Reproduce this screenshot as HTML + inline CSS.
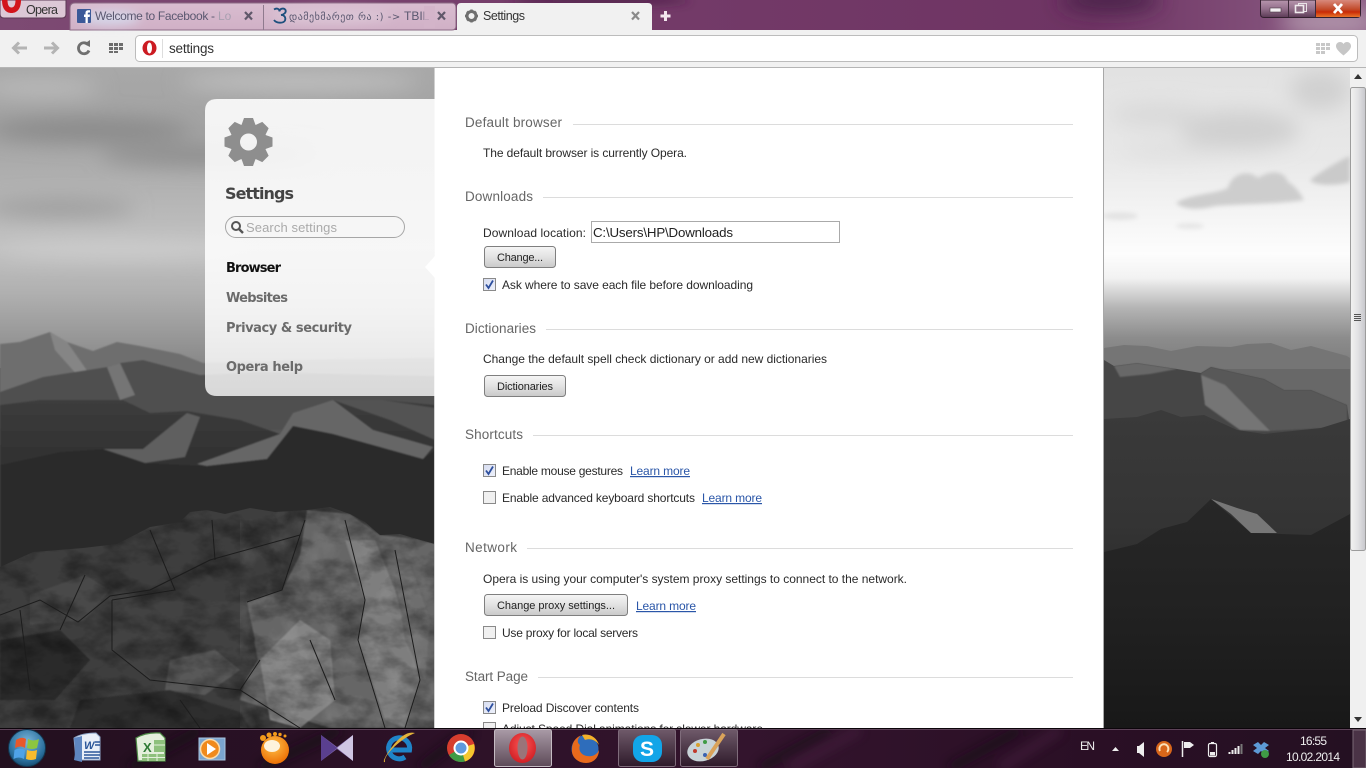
<!DOCTYPE html>
<html lang="en"><head><meta charset="utf-8"><title>Settings</title>
<style>
html,body{margin:0;padding:0;width:1366px;height:768px;overflow:hidden;background:#fff}
svg{display:block;position:absolute;left:0;top:0}
text{font-family:"Liberation Sans",sans-serif;font-size:12px;fill:#2a2a2a;white-space:pre}
.h{font-size:13.5px;fill:#666}
.l{fill:#2a56a8;text-decoration:underline}
.b{font-size:11px;fill:#222}
.n{font-family:"DejaVu Sans",sans-serif;font-weight:bold;font-size:13px;fill:#6b6b6b}
.tab{font-family:"DejaVu Sans",sans-serif;font-size:11.5px;fill:#5b5870}
.tray{font-size:12px;fill:#eee}
</style></head><body>
<svg width="1366" height="768" viewBox="0 0 1366 768" xmlns="http://www.w3.org/2000/svg">
<defs>
<linearGradient id="skyL" gradientUnits="userSpaceOnUse" x1="0" y1="68" x2="0" y2="368"><stop offset="0" stop-color="#a8a8a8"/><stop offset=".2" stop-color="#a2a2a2"/><stop offset=".6" stop-color="#c2c2c2"/><stop offset=".75" stop-color="#b0b0b0"/><stop offset="1" stop-color="#868686"/></linearGradient>
<linearGradient id="skyR" gradientUnits="userSpaceOnUse" x1="0" y1="68" x2="0" y2="368"><stop offset="0" stop-color="#e2e2e2"/><stop offset=".3" stop-color="#e8e8e8"/><stop offset=".62" stop-color="#fdfdfd"/><stop offset=".7" stop-color="#f2f2f2"/><stop offset=".8" stop-color="#b4b4b4"/><stop offset=".9" stop-color="#8c8c8c"/><stop offset="1" stop-color="#7c7c7c"/></linearGradient>
<linearGradient id="darkR" gradientUnits="userSpaceOnUse" x1="0" y1="410" x2="0" y2="600"><stop offset="0" stop-color="#3a3a3a"/><stop offset=".6" stop-color="#343434"/><stop offset="1" stop-color="#2a2a2a"/></linearGradient>
<linearGradient id="darkR2" gradientUnits="userSpaceOnUse" x1="0" y1="500" x2="0" y2="729"><stop offset="0" stop-color="#272727"/><stop offset=".5" stop-color="#212121"/><stop offset="1" stop-color="#181818"/></linearGradient>
<linearGradient id="midL" x1="0" y1="0" x2="0" y2="1"><stop offset="0" stop-color="#3c3c3c"/><stop offset="1" stop-color="#262626"/></linearGradient>
<linearGradient id="panel" x1="0" y1="0" x2="0" y2="1"><stop offset="0" stop-color="#fff" stop-opacity=".88"/><stop offset=".7" stop-color="#fff" stop-opacity=".86"/><stop offset="1" stop-color="#fff" stop-opacity=".78"/></linearGradient>
<linearGradient id="top" x1="0" y1="0" x2="1" y2="0"><stop offset="0" stop-color="#7d4a73"/><stop offset=".5" stop-color="#733a68"/><stop offset=".8" stop-color="#6e3463"/><stop offset="1" stop-color="#8d5f86"/></linearGradient>
<linearGradient id="tabg" x1="0" y1="0" x2="0" y2="1"><stop offset="0" stop-color="#d9bdd0"/><stop offset="1" stop-color="#d0b0c6"/></linearGradient>
<linearGradient id="btn" x1="0" y1="0" x2="0" y2="1"><stop offset="0" stop-color="#f6f6f6"/><stop offset=".5" stop-color="#e2e2e2"/><stop offset="1" stop-color="#c9c9c9"/></linearGradient>
<linearGradient id="task" x1="0" y1="0" x2="1" y2="0"><stop offset="0" stop-color="#23101f"/><stop offset=".3" stop-color="#2c1127"/><stop offset=".55" stop-color="#33142d"/><stop offset=".8" stop-color="#2a0f25"/><stop offset="1" stop-color="#241022"/></linearGradient>
<linearGradient id="act" x1="0" y1="0" x2="0" y2="1"><stop offset="0" stop-color="#a99aa6"/><stop offset="1" stop-color="#5d4a58"/></linearGradient>
<linearGradient id="act2" x1="0" y1="0" x2="0" y2="1"><stop offset="0" stop-color="#6f5a6a"/><stop offset="1" stop-color="#2e1a2a"/></linearGradient>
<linearGradient id="close" x1="0" y1="0" x2="0" y2="1"><stop offset="0" stop-color="#d8897c"/><stop offset=".55" stop-color="#c24a2a"/><stop offset=".7" stop-color="#c92a06"/><stop offset="1" stop-color="#e8742a"/></linearGradient>
<linearGradient id="ctl" x1="0" y1="0" x2="0" y2="1"><stop offset="0" stop-color="#b796ae"/><stop offset=".5" stop-color="#94708c"/><stop offset="1" stop-color="#5b3a55"/></linearGradient>
<linearGradient id="scr" x1="0" y1="0" x2="1" y2="0"><stop offset="0" stop-color="#f2f2f2"/><stop offset=".5" stop-color="#e2e2e4"/><stop offset="1" stop-color="#c6c6cb"/></linearGradient>
<linearGradient id="cb" x1="0" y1="0" x2="1" y2="1"><stop offset="0" stop-color="#d6dcf0"/><stop offset="1" stop-color="#eef1fb"/></linearGradient>
<radialGradient id="orb" cx=".5" cy=".35" r=".7"><stop offset="0" stop-color="#7db8dc"/><stop offset=".7" stop-color="#2a6f9d"/><stop offset="1" stop-color="#134263"/></radialGradient>
<radialGradient id="gom" cx=".45" cy=".35" r=".7"><stop offset="0" stop-color="#ffc24a"/><stop offset="1" stop-color="#ea6a00"/></radialGradient>
<radialGradient id="opa" cx=".5" cy=".4" r=".7"><stop offset="0" stop-color="#f55"/><stop offset="1" stop-color="#c8171d"/></radialGradient>
<filter id="b2" x="-30%" y="-30%" width="160%" height="160%"><feGaussianBlur stdDeviation="2"/></filter>
<filter id="b1" x="-5%" y="-5%" width="110%" height="110%"><feGaussianBlur stdDeviation=".8"/></filter>
<filter id="b5" x="-50%" y="-200%" width="200%" height="500%"><feGaussianBlur stdDeviation="5"/></filter>
<filter id="b10" x="-50%" y="-100%" width="200%" height="300%"><feGaussianBlur stdDeviation="10"/></filter>
<filter id="tex" x="0" y="0" width="100%" height="100%"><feTurbulence type="fractalNoise" baseFrequency=".03 .05" numOctaves="4" seed="7"/><feColorMatrix type="matrix" values="0 0 0 0 0  0 0 0 0 0  0 0 0 0 0  2.2 0 0 0 -.85"/></filter>
<filter id="texw" x="0" y="0" width="100%" height="100%"><feTurbulence type="fractalNoise" baseFrequency=".04 .03" numOctaves="4" seed="21"/><feColorMatrix type="matrix" values="0 0 0 0 1  0 0 0 0 1  0 0 0 0 1  2 0 0 0 -.9"/></filter>
<clipPath id="cL"><rect x="0" y="68" width="435" height="660"/></clipPath>
<clipPath id="cR"><rect x="1104" y="68" width="246" height="660"/></clipPath>
<clipPath id="cT"><rect x="0" y="0" width="1366" height="31"/></clipPath>
<clipPath id="cP"><rect x="435" y="68" width="668" height="660"/></clipPath>
<clipPath id="cK"><rect x="0" y="730" width="1366" height="38"/></clipPath>
<clipPath id="rock"><polygon points="0,567 33,552 83,548 117,544 150,527 180,522 190,512 207,510 225,514 250,508 275,512 307,510 330,507 350,514 365,522 380,535 400,534 417,539 435,544 435,728 0,728"/></clipPath>
</defs>

<!-- LEFT BACKGROUND -->
<g clip-path="url(#cL)">
<rect x="0" y="68" width="435" height="300" fill="url(#skyL)"/>
<g filter="url(#b10)">
<ellipse cx="90" cy="130" rx="100" ry="12" fill="#8a8a8a"/>
<ellipse cx="210" cy="155" rx="110" ry="11" fill="#8e8e8e"/>
<ellipse cx="60" cy="208" rx="75" ry="8" fill="#9a9a9a"/>
<ellipse cx="300" cy="82" rx="120" ry="8" fill="#c4c4c4"/>
<ellipse cx="120" cy="250" rx="120" ry="7" fill="#cfcfcf"/>
<ellipse cx="40" cy="88" rx="60" ry="8" fill="#bdbdbd"/>
</g>
<rect x="0" y="368" width="435" height="361" fill="#555"/>
<g filter="url(#b1)">
<polygon points="0,344 20,342 50,332 67,342 93,351 117,342 140,346 180,354 203,363 300,360 435,358 435,420 0,420" fill="#6e6e6e"/>
<polygon points="50,332 67,342 88,372 80,378 55,350" fill="#858585"/>
<polygon points="0,392 43,377 107,367 120,363 143,360 200,375 260,372 435,376 435,430 0,430" fill="#505050"/>
<polygon points="107,367 120,363 135,395 120,400" fill="#747474"/>
<polygon points="0,405 40,400 123,400 150,413 187,411 240,420 280,434 293,413 333,400 383,400 435,405 435,520 0,520" fill="url(#midL)"/>
<polygon points="103,449 143,449 187,413 200,417 185,457 145,463" fill="#5e5e5e"/>
<polygon points="197,464 280,434 293,413 333,400 373,430 433,447 423,459 333,434 293,426 267,459 207,466" fill="#666"/>
<polygon points="333,400 350,400 383,400 435,408 435,440 390,420" fill="#525252"/>
<polygon points="0,465 60,452 103,449 145,463 207,466 267,459 293,426 333,434 423,459 435,450 435,560 0,590" fill="#2c2c2c"/>
</g>
<polygon points="0,567 33,552 83,548 117,544 150,527 180,522 190,512 207,510 225,514 250,508 275,512 307,510 330,507 350,514 365,522 380,535 400,534 417,539 435,544 435,728 0,728" fill="#3e3e3e"/>
<g clip-path="url(#rock)">
<g filter="url(#b1)">
<polygon points="307,510 350,514 380,535 417,539 435,544 435,728 330,728 240,700 255,640 247,602 282,590 300,555" fill="#666"/>
<polygon points="345,540 365,600 358,640 385,720 405,728 420,680 395,590 375,540" fill="#7e7e7e"/>
<polygon points="260,660 300,620 330,640 335,700 300,728 270,720" fill="#848484"/>
<polygon points="395,575 410,565 430,620 425,680 405,640" fill="#6e6e6e"/>
<polygon points="112,600 247,602 258,660 240,690 150,680 112,650" fill="#434343"/>
<polygon points="170,660 215,650 240,670 205,695 165,690" fill="#585858"/>
<polygon points="30,595 85,575 110,590 85,620 30,625" fill="#4a4a4a"/>
<polygon points="0,640 60,630 90,660 55,700 0,700" fill="#2b2b2b"/>
<polygon points="80,700 170,690 240,712 250,728 70,728" fill="#2f2f2f"/>
</g>
<rect x="0" y="505" width="435" height="225" filter="url(#tex)" opacity=".4"/>
<rect x="240" y="505" width="195" height="225" filter="url(#texw)" opacity=".12"/>
<g stroke="#1c1c1c" stroke-width="1" fill="none">
<path d="M0 615L40 600 78 622 110 596 150 590 210 560 300 535"/>
<path d="M112 600V650L150 680 240 690 300 728"/>
<path d="M247 602L282 590 305 520"/>
<path d="M345 520L365 600 358 640 385 728"/>
<path d="M395 550L420 680 405 728"/>
<path d="M150 530L175 590 112 600"/>
<path d="M60 630L85 575M20 610L30 690M180 700L200 728"/>
<path d="M212 520L215 560M260 660L240 690M310 640L335 700"/>
</g>
</g>
</g>

<!-- RIGHT BACKGROUND -->
<g clip-path="url(#cR)">
<rect x="1104" y="68" width="246" height="300" fill="url(#skyR)"/>
<g filter="url(#b10)">
<ellipse cx="1240" cy="130" rx="60" ry="20" fill="#d0d0d0"/>
<ellipse cx="1160" cy="115" rx="50" ry="11" fill="#d8d8d8"/>
<ellipse cx="1320" cy="90" rx="30" ry="20" fill="#d0d0d0"/>
<ellipse cx="1170" cy="150" rx="50" ry="7" fill="#dedede"/>
</g>
<g filter="url(#b2)">
<path d="M1176 203C1190 194 1215 194 1228 188 1232 172 1250 170 1258 178 1270 170 1284 170 1288 182 1296 186 1302 196 1304 200 1280 204 1240 204 1215 206 1200 210 1184 210 1176 203Z" fill="#cdcdcd"/>
<path d="M1310 180C1320 172 1340 160 1350 156V182C1335 186 1315 186 1310 180Z" fill="#cacaca"/>
<ellipse cx="1120" cy="216" rx="18" ry="4" fill="#e4e4e4"/>
<ellipse cx="1190" cy="226" rx="14" ry="3" fill="#e6e6e6"/>
</g>
<polygon points="1104,348 1124,345 1147,346 1171,351 1197,346 1231,347 1247,344 1271,343 1291,350 1311,346 1347,356 1350,358 1350,440 1104,440" fill="#757575"/>
<rect x="1220" y="369" width="130" height="70" fill="#686868"/>
<polygon points="1104,360 1114,366 1137,363 1177,369 1201,373 1211,367 1237,373 1264,379 1284,390 1311,390 1347,405 1350,426 1350,480 1104,480" fill="#464646"/>
<g filter="url(#b1)">
<polygon points="1114,366 1137,363 1177,369 1150,374 1120,377" fill="#686868"/>
<polygon points="1201,373 1211,367 1237,373 1264,379 1284,390 1311,390 1347,405 1347,422 1325,428 1270,431 1240,430 1205,405" fill="#585858"/>
<polygon points="1201,375 1225,385 1270,431 1240,430 1205,405" fill="#747474"/>
</g>
<polygon points="1104,419 1137,417 1161,410 1181,417 1204,415 1237,430 1264,434 1321,428 1350,419 1350,600 1104,600" fill="url(#darkR)"/>
<polygon points="1104,552 1137,544 1161,529 1187,522 1211,499 1251,533 1311,535 1350,514 1350,729 1104,729" fill="url(#darkR2)"/>
<polygon points="1211,499 1237,508 1257,514 1277,533 1251,533 1231,514" fill="#777"/>
</g>

<!-- PAGE -->
<rect x="435" y="68" width="668" height="660" fill="#fff"/>
<rect x="1103" y="68" width="1" height="660" fill="#a8a8a8"/>
<rect x="434" y="68" width="1" height="660" fill="#d0d0d0"/>

<!-- SCROLLBAR -->
<rect x="1350" y="68" width="16" height="661" fill="#f0f0f0"/>
<polygon points="1354,79 1358,74 1362,79" fill="#333"/>
<polygon points="1354,717 1358,722 1362,717" fill="#333"/>
<rect x="1350.500" y="87.500" width="15" height="463" rx="2" fill="url(#scr)" stroke="#9c9c9c"/>
<path d="M1354 314.500h7M1354 316.500h7M1354 318.500h7M1354 320.500h7" stroke="#555" stroke-width="1"/>

<!-- SIDE PANEL -->
<path d="M435 99H217Q205 99 205 111V384Q205 396 217 396H435Z" fill="url(#panel)"/>
<path d="M435 256L425 267 435 278Z" fill="#fff"/>
<g fill="#8e8e8e">
<circle cx="248.500" cy="142" r="13.500" fill="none" stroke="#8e8e8e" stroke-width="10"/>
<polygon points="241.500,125 255.500,125 253,118 244,118"/>
<polygon points="241.500,125 255.500,125 253,118 244,118" transform="rotate(45 248.500 142)"/>
<polygon points="241.500,125 255.500,125 253,118 244,118" transform="rotate(90 248.500 142)"/>
<polygon points="241.500,125 255.500,125 253,118 244,118" transform="rotate(135 248.500 142)"/>
<polygon points="241.500,125 255.500,125 253,118 244,118" transform="rotate(180 248.500 142)"/>
<polygon points="241.500,125 255.500,125 253,118 244,118" transform="rotate(225 248.500 142)"/>
<polygon points="241.500,125 255.500,125 253,118 244,118" transform="rotate(270 248.500 142)"/>
<polygon points="241.500,125 255.500,125 253,118 244,118" transform="rotate(315 248.500 142)"/>
</g>
<text x="225" y="199" textLength="69" style="font-family:'DejaVu Sans',sans-serif;font-weight:bold;font-size:16px;fill:#444">Settings</text>
<rect x="225.500" y="216.500" width="179" height="21" rx="10.500" fill="#f7f7f7" fill-opacity=".6" stroke="#a6a6a6"/>
<circle cx="236" cy="226" r="4" fill="none" stroke="#555" stroke-width="2"/>
<path d="M239 229L243 233" stroke="#555" stroke-width="2.400"/>
<text x="246" y="232" textLength="91" style="font-size:13px;fill:#aaa">Search settings</text>
<text x="226" y="272" textLength="55" class="n" style="fill:#111">Browser</text>
<text x="226" y="302" textLength="62" class="n">Websites</text>
<text x="226" y="332" textLength="126" class="n">Privacy &amp; security</text>
<text x="226" y="371" textLength="77" class="n">Opera help</text>

<!-- CONTENT -->
<g clip-path="url(#cP)">
<g stroke="#dcdcdc" stroke-width="1">
<path d="M573 124.500H1073M543 197.500H1073M546 329.500H1073M533 435.500H1073M527 548.500H1073M538 677.500H1073"/>
</g>
<text class="h" x="465" y="127" textLength="97">Default browser</text>
<text x="483" y="157" textLength="204">The default browser is currently Opera.</text>
<text class="h" x="465" y="201" textLength="68">Downloads</text>
<text x="483" y="237" textLength="103">Download location:</text>
<rect x="591.500" y="221.500" width="248" height="21" fill="#fff" stroke="#aaa"/>
<text x="593" y="237" textLength="140" style="font-size:13.300px;fill:#222">C:\Users\HP\Downloads</text>
<rect x="484.500" y="246.500" width="71" height="21" rx="3" fill="url(#btn)" stroke="#7f7f7f"/>
<text class="b" x="497" y="261" textLength="46">Change...</text>
<rect x="483.500" y="278.500" width="12" height="12" fill="url(#cb)" stroke="#8a8a8a"/>
<path d="M486 284.500L488.500 288 493 280.500" fill="none" stroke="#2d4f9e" stroke-width="1.800"/>
<text x="502" y="289" textLength="251">Ask where to save each file before downloading</text>
<text class="h" x="465" y="333" textLength="71">Dictionaries</text>
<text x="483" y="363" textLength="344">Change the default spell check dictionary or add new dictionaries</text>
<rect x="484.500" y="375.500" width="81" height="21" rx="3" fill="url(#btn)" stroke="#7f7f7f"/>
<text class="b" x="497" y="390" textLength="56">Dictionaries</text>
<text class="h" x="465" y="439" textLength="58">Shortcuts</text>
<rect x="483.500" y="464.500" width="12" height="12" fill="url(#cb)" stroke="#8a8a8a"/>
<path d="M486 470.500L488.500 474 493 466.500" fill="none" stroke="#2d4f9e" stroke-width="1.800"/>
<text x="502" y="475" textLength="121">Enable mouse gestures</text>
<text class="l" x="630" y="475" textLength="60">Learn more</text>
<rect x="483.500" y="491.500" width="12" height="12" fill="#f0f0f0" stroke="#8a8a8a"/>
<text x="502" y="502" textLength="193">Enable advanced keyboard shortcuts</text>
<text class="l" x="702" y="502" textLength="60">Learn more</text>
<text class="h" x="465" y="552" textLength="52">Network</text>
<text x="483" y="583" textLength="424">Opera is using your computer's system proxy settings to connect to the network.</text>
<rect x="484.500" y="594.500" width="143" height="21" rx="3" fill="url(#btn)" stroke="#7f7f7f"/>
<text class="b" x="497" y="609" textLength="118">Change proxy settings...</text>
<text class="l" x="636" y="610" textLength="60">Learn more</text>
<rect x="483.500" y="626.500" width="12" height="12" fill="#f0f0f0" stroke="#8a8a8a"/>
<text x="502" y="637" textLength="136">Use proxy for local servers</text>
<text class="h" x="465" y="681" textLength="63">Start Page</text>
<rect x="483.500" y="701.500" width="12" height="12" fill="url(#cb)" stroke="#8a8a8a"/>
<path d="M486 707.500L488.500 711 493 703.500" fill="none" stroke="#2d4f9e" stroke-width="1.800"/>
<text x="502" y="712" textLength="137">Preload Discover contents</text>
<rect x="483.500" y="722.500" width="12" height="12" fill="#f0f0f0" stroke="#8a8a8a"/>
<text x="502" y="733" textLength="261">Adjust Speed Dial animations for slower hardware</text>
</g>

<!-- TITLE BAR -->
<rect x="0" y="0" width="1366" height="31" fill="url(#top)"/>
<g clip-path="url(#cT)">
<ellipse cx="1110" cy="0" rx="50" ry="12" fill="#4a2048" filter="url(#b10)"/>
<ellipse cx="600" cy="0" rx="90" ry="4" fill="#4a1c45" filter="url(#b5)"/>
<ellipse cx="1330" cy="22" rx="50" ry="14" fill="#b094aa" filter="url(#b10)"/>
</g>
<!-- toolbar -->
<rect x="0" y="30" width="1366" height="37" fill="#f1f1f1"/>
<rect x="0" y="67" width="1366" height="1" fill="#b5b5b5"/>
<!-- tab strip -->
<path d="M70 30V8Q70 3 75 3H452Q456 3 456 8V26Q456 30 452 30Z" fill="url(#tabg)" stroke="#8c6a85"/>
<ellipse cx="110" cy="18" rx="30" ry="7" fill="#d6d8ea" filter="url(#b5)"/>
<ellipse cx="330" cy="16" rx="60" ry="7" fill="#dcc6d6" filter="url(#b5)"/>
<path d="M263.500 5V30" stroke="#8f7a8e"/>
<rect x="77" y="9" width="14" height="14" rx="1" fill="#3b5998"/>
<path d="M85.500 23V17H84V14.500H85.500V13C85.500 11 86.700 10.300 88.200 10.300H90V12.500H88.800C88 12.500 87.800 12.900 87.800 13.400V14.500H90L89.700 17H87.800V23Z" fill="#fff"/>
<text class="tab" x="95" y="20" textLength="123" style="font-family:'Liberation Sans',sans-serif;font-size:12px">Welcome to Facebook - </text>
<text class="tab" x="218" y="20" style="font-family:'Liberation Sans',sans-serif;font-size:12px;fill:#a8a0b0">Lo</text>
<path d="M245 12L252 19.500M252 12L245 19.500" stroke="#60586a" stroke-width="2.200"/>
<path d="M274 9.500C277 7.500 279.500 9 279.500 11.500 279.500 8.500 284 7.500 285.500 10 286.500 12.500 284 14.500 281 15 284.500 15 286 17.500 285 20.500 283.500 23.500 276.500 23.500 274 20" fill="none" stroke="#1d4f7d" stroke-width="1.800"/>
<text class="tab" x="289" y="20" textLength="115" style="font-size:10px">დამეხმარეთ რა :) -&gt; </text>
<text class="tab" x="404" y="20" style="font-family:'Liberation Sans',sans-serif;font-size:12px">TBIL</text>
<rect x="424" y="6" width="11" height="22" fill="#d3b4c9" fill-opacity=".8"/>
<path d="M438 12L445 19.500M445 12L438 19.500" stroke="#60586a" stroke-width="2.200"/>
<!-- active tab -->
<path d="M457 31V7Q457 3 461 3H648Q652 3 652 7V31Z" fill="#f1f1f1"/>
<circle cx="471.500" cy="16" r="4.500" fill="none" stroke="#6f6f6f" stroke-width="3"/>
<path d="M471.500 9.500V12M471.500 20V22.500M465 16H467.500M475.500 16H478M467 11.500L468.600 13.100M474.400 18.900L476 20.500M476 11.500L474.400 13.100M468.600 18.900L467 20.500" stroke="#6f6f6f" stroke-width="2.400"/>
<text x="483" y="20" textLength="42" style="font-size:12.500px;fill:#333">Settings</text>
<path d="M632 12L639 19.500M639 12L632 19.500" stroke="#8a8a8a" stroke-width="2.200"/>
<path d="M665.500 11V21M660.500 16H670.500" stroke="#f3e6ee" stroke-width="3"/>
<!-- opera button -->
<path d="M0 0H66V14Q66 18 62 18H4Q0 18 0 14Z" fill="#dcc8d6" stroke="#5d3a55"/>
<path d="M2 0C2 9 6 13 11.500 13 17 13 21 9 21 0H15.500C15.500 5 14 7.500 11.500 7.500 9 7.500 7.500 5 7.500 0Z" fill="#d2141c"/>
<text x="26" y="14" textLength="32" style="font-size:12.500px;fill:#333">Opera</text>
<!-- window controls -->
<path d="M1260.500 0V14Q1260.500 17.500 1264 17.500H1357Q1360.500 17.500 1360.500 14V0Z" fill="url(#ctl)" stroke="#33202f"/>
<rect x="1316" y="0" width="44" height="17" fill="url(#close)"/>
<path d="M1288.500 0V17M1315.500 0V17" stroke="#3e2a3a"/>
<rect x="1270" y="8" width="11" height="4" fill="#f4f0f3" stroke="#4a3a46" stroke-width=".6"/>
<rect x="1298.500" y="3.500" width="8" height="8" fill="none" stroke="#e8e2e6"/>
<rect x="1295.500" y="5.500" width="8" height="7" fill="#8d6d85" stroke="#f0eaee" stroke-width="1.600"/>
<path d="M1334 4L1342 13M1342 4L1334 13" stroke="#fff" stroke-width="2.800"/>
<!-- toolbar icons -->
<path d="M13 48H27M19 42.500L13.500 48 19 53.500" fill="none" stroke="#b4b4b4" stroke-width="3"/>
<path d="M44 48H58M52 42.500L57.500 48 52 53.500" fill="none" stroke="#b4b4b4" stroke-width="3"/>
<path d="M88 44.500A5.500 5.500 0 1 0 89 50.500" fill="none" stroke="#6f6f6f" stroke-width="2.800"/>
<polygon points="84,44 90,40 90,47" fill="#6f6f6f"/>
<g fill="#6d6d6d"><rect x="109" y="43" width="4" height="3"/><rect x="114" y="43" width="4" height="3"/><rect x="119" y="43" width="4" height="3"/><rect x="109" y="47" width="4" height="3"/><rect x="114" y="47" width="4" height="3"/><rect x="119" y="47" width="4" height="3"/><rect x="109" y="51" width="4" height="2"/><rect x="114" y="51" width="4" height="2"/></g>
<!-- address bar -->
<rect x="135.500" y="35.500" width="1222" height="26" rx="4" fill="#fff" stroke="#bcbcbc"/>
<ellipse cx="149.500" cy="48" rx="7" ry="7.500" fill="#cc1b22"/>
<ellipse cx="149.500" cy="48" rx="2.500" ry="5.500" fill="#fff"/>
<path d="M162.500 39V58" stroke="#ddd"/>
<text x="169" y="53" textLength="45" style="font-size:13.500px;fill:#333">settings</text>
<g fill="#c8c8c8"><rect x="1316" y="43" width="4" height="3"/><rect x="1321" y="43" width="4" height="3"/><rect x="1326" y="43" width="4" height="3"/><rect x="1316" y="47" width="4" height="3"/><rect x="1321" y="47" width="4" height="3"/><rect x="1326" y="47" width="4" height="3"/><rect x="1316" y="51" width="4" height="3"/><rect x="1321" y="51" width="4" height="3"/></g>
<path d="M1343.500 55.500C1338 51 1336 48.500 1336 46 1336 43.500 1338 42 1340 42 1341.500 42 1342.800 42.800 1343.500 44 1344.200 42.800 1345.500 42 1347 42 1349 42 1351 43.500 1351 46 1351 48.500 1349 51 1343.500 55.500Z" fill="#c6c6c6"/>

<!-- TASKBAR -->
<rect x="0" y="728" width="1366" height="40" fill="url(#task)"/>
<rect x="0" y="728" width="1366" height="1" fill="#0c050b"/>
<rect x="0" y="729" width="1366" height="1" fill="#5d4258"/>
<g clip-path="url(#cK)">
<g filter="url(#b5)" opacity=".6">
<path d="M130 768L200 730M260 768L340 730M420 768L470 730M760 768L830 730M950 768L1020 730" stroke="#140812" stroke-width="10"/>
<path d="M790 768L860 730M1000 768L1060 730" stroke="#4a2142" stroke-width="8"/>
</g>
</g>
<!-- start orb -->
<circle cx="27" cy="748" r="18.500" fill="url(#orb)" stroke="#12364f"/>
<path d="M16 740Q22 736 26 739L25 748Q21 745 15 748Z" fill="#e8582a"/>
<path d="M28 739Q33 742 39 739L37 748Q32 750 27 748Z" fill="#8cc63f"/>
<path d="M14.500 750Q20 747 25 750L24 759Q19 756 13.500 759Z" fill="#4fa3e8"/>
<path d="M27 750Q32 752 37 750L36 759Q31 761 26 759Z" fill="#f8bc2e"/>
<!-- word -->
<path d="M74 738Q82 733 96 733L100 737V760H76Z" fill="#e9eff8" stroke="#8ea6c8"/>
<path d="M74 738Q76 750 74 760L82 762V736Z" fill="#5e86c0"/>
<text x="84" y="749" style="font-size:11px;font-weight:bold;font-style:italic;fill:#2a5699">W</text>
<path d="M84 752H100M84 755H100M84 758H99M95 742H100M95 745H100" stroke="#2a5699" stroke-width="1.500"/>
<!-- excel -->
<path d="M136 738Q146 732 160 733L165 738V761H138Z" fill="#e4efdc" stroke="#4e8a46" stroke-width="1.200"/>
<text x="143" y="752" style="font-size:13px;font-weight:bold;fill:#2f7a35">X</text>
<path d="M142 754H165V761H142ZM154 740H165V752H154Z" fill="#8ec07c"/>
<path d="M148 754V761M157 754V761M154 745H165M142 757.500H165" stroke="#e4efdc"/>
<!-- wmp -->
<rect x="199" y="738" width="26" height="22" fill="#7ba5cf" stroke="#a8c5e0"/>
<circle cx="210" cy="749" r="9.500" fill="#f08a1d" stroke="#f9dcae" stroke-width="1.500"/>
<polygon points="207,743 216,749 207,755" fill="#fff"/>
<!-- gom -->
<circle cx="275" cy="750" r="14" fill="url(#gom)"/>
<ellipse cx="272" cy="746" rx="8" ry="6" fill="#fdf3dd"/>
<circle cx="263" cy="738" r="3" fill="#f39b1a"/><circle cx="269" cy="735" r="2.500" fill="#f39b1a"/><circle cx="275" cy="734" r="2" fill="#f39b1a"/><circle cx="280" cy="734.500" r="1.700" fill="#f39b1a"/><circle cx="285" cy="736" r="1.500" fill="#f39b1a"/>
<!-- VS -->
<polygon points="321,735 337,747 353,735 353,761 337,749 321,761" fill="#7c63a8"/>
<polygon points="321,735 337,748 321,761" fill="#5a3f8f"/>
<polygon points="353,735 337,748 353,761" fill="#cfc6e3"/>
<!-- IE -->
<path d="M389.500 750H409.500A10.500 10.500 0 1 0 405 757" fill="none" stroke="#1f84c8" stroke-width="5"/>
<path d="M385 762C383 755 402 738 415 733 408 731 400 736 392 747 385 756 382 763 385 762Z" fill="#e2b33a"/>
<!-- chrome -->
<circle cx="461" cy="748" r="14" fill="#d63d2e"/>
<path d="M461 748L449 755A14 14 0 0 0 465 761.500Z" fill="#3f9b45"/>
<path d="M461 748L474 744A14 14 0 0 1 465 761.500Z" fill="#f4c72e"/>
<circle cx="461" cy="748" r="6.500" fill="#5f99dd" stroke="#fff" stroke-width="2"/>
<!-- opera -->
<rect x="494.500" y="729.500" width="57" height="37" rx="2" fill="url(#act)" stroke="#c5bbc3"/>
<ellipse cx="522.500" cy="748" rx="13.500" ry="15" fill="url(#opa)"/>
<ellipse cx="522.500" cy="748" rx="5" ry="11.500" fill="#9a7479"/>
<!-- firefox -->
<circle cx="585" cy="749" r="13.500" fill="#2e6dbb"/>
<path d="M572 749C571 757 578 763 586 763 594 763 599 757 599 750 597 755 592 757 587 756 581 755 578 750 580 745 576 742 578 737 582 735 576 737 572 742 572 749Z" fill="#e86a1c"/>
<path d="M582 735C590 733 597 738 599 745 596 740 590 738 585 740Z" fill="#f3b12a"/>
<!-- skype -->
<rect x="618.500" y="729.500" width="57" height="37" rx="2" fill="url(#act2)" stroke="#7f6c7b"/>
<rect x="633" y="735" width="29" height="27" rx="10" fill="#12a5e8"/>
<text x="640" y="756" style="font-size:21px;font-weight:bold;fill:#fff">S</text>
<!-- paint -->
<rect x="680.500" y="729.500" width="57" height="37" rx="2" fill="url(#act2)" stroke="#7f6c7b"/>
<ellipse cx="703" cy="750" rx="16" ry="11" fill="#c8d4d8" transform="rotate(-15 703 750)"/>
<circle cx="698" cy="745" r="2" fill="#d8a12e"/><circle cx="705" cy="742" r="2" fill="#3f9b45"/><circle cx="695" cy="751" r="2" fill="#c0392b"/><circle cx="705" cy="755" r="2" fill="#3a62b0"/>
<path d="M707 759L724 734" stroke="#d9a35a" stroke-width="4"/>
<!-- tray -->
<text class="tray" x="1080" y="750" textLength="15">EN</text>
<polygon points="1112,751 1115.500,747 1119,751" fill="#eee"/>
<path d="M1137 746H1139L1144 742V757L1139 753H1137Z" fill="#eee"/>
<circle cx="1164" cy="749" r="8" fill="#d8661a"/>
<path d="M1160 751A4.500 4.500 0 1 1 1167 752" fill="none" stroke="#fbe0b8" stroke-width="2"/>
<path d="M1182.500 741V757" stroke="#eee" stroke-width="1.500"/>
<path d="M1184 742H1190L1194 745 1190 748H1184Z" fill="#eee"/>
<rect x="1208.500" y="743.500" width="8" height="13" rx="1.500" fill="none" stroke="#eee" stroke-width="1.200"/>
<rect x="1211" y="742" width="3" height="1.500" fill="#eee"/>
<rect x="1210" y="752" width="5" height="3.500" fill="#eee"/>
<path d="M1229.500 754V752M1232.500 754V750M1235.500 754V748M1238.500 754V746" stroke="#eee" stroke-width="2"/>
<path d="M1241.500 754V744" stroke="#777" stroke-width="2"/>
<path d="M1253 745L1258 742 1261 745 1264 742 1269 745 1265 748 1269 751 1264 754 1261 751 1258 754 1253 751 1257 748Z" fill="#5d9ad6"/>
<circle cx="1265" cy="754" r="4" fill="#3f9b45"/>
<text class="tray" x="1300" y="745" textLength="27">16:55</text>
<text class="tray" x="1286" y="761" textLength="54">10.02.2014</text>
<rect x="1353" y="730" width="13" height="38" fill="#4a3346" stroke="#7a6a77"/>
</svg>
</body></html>
